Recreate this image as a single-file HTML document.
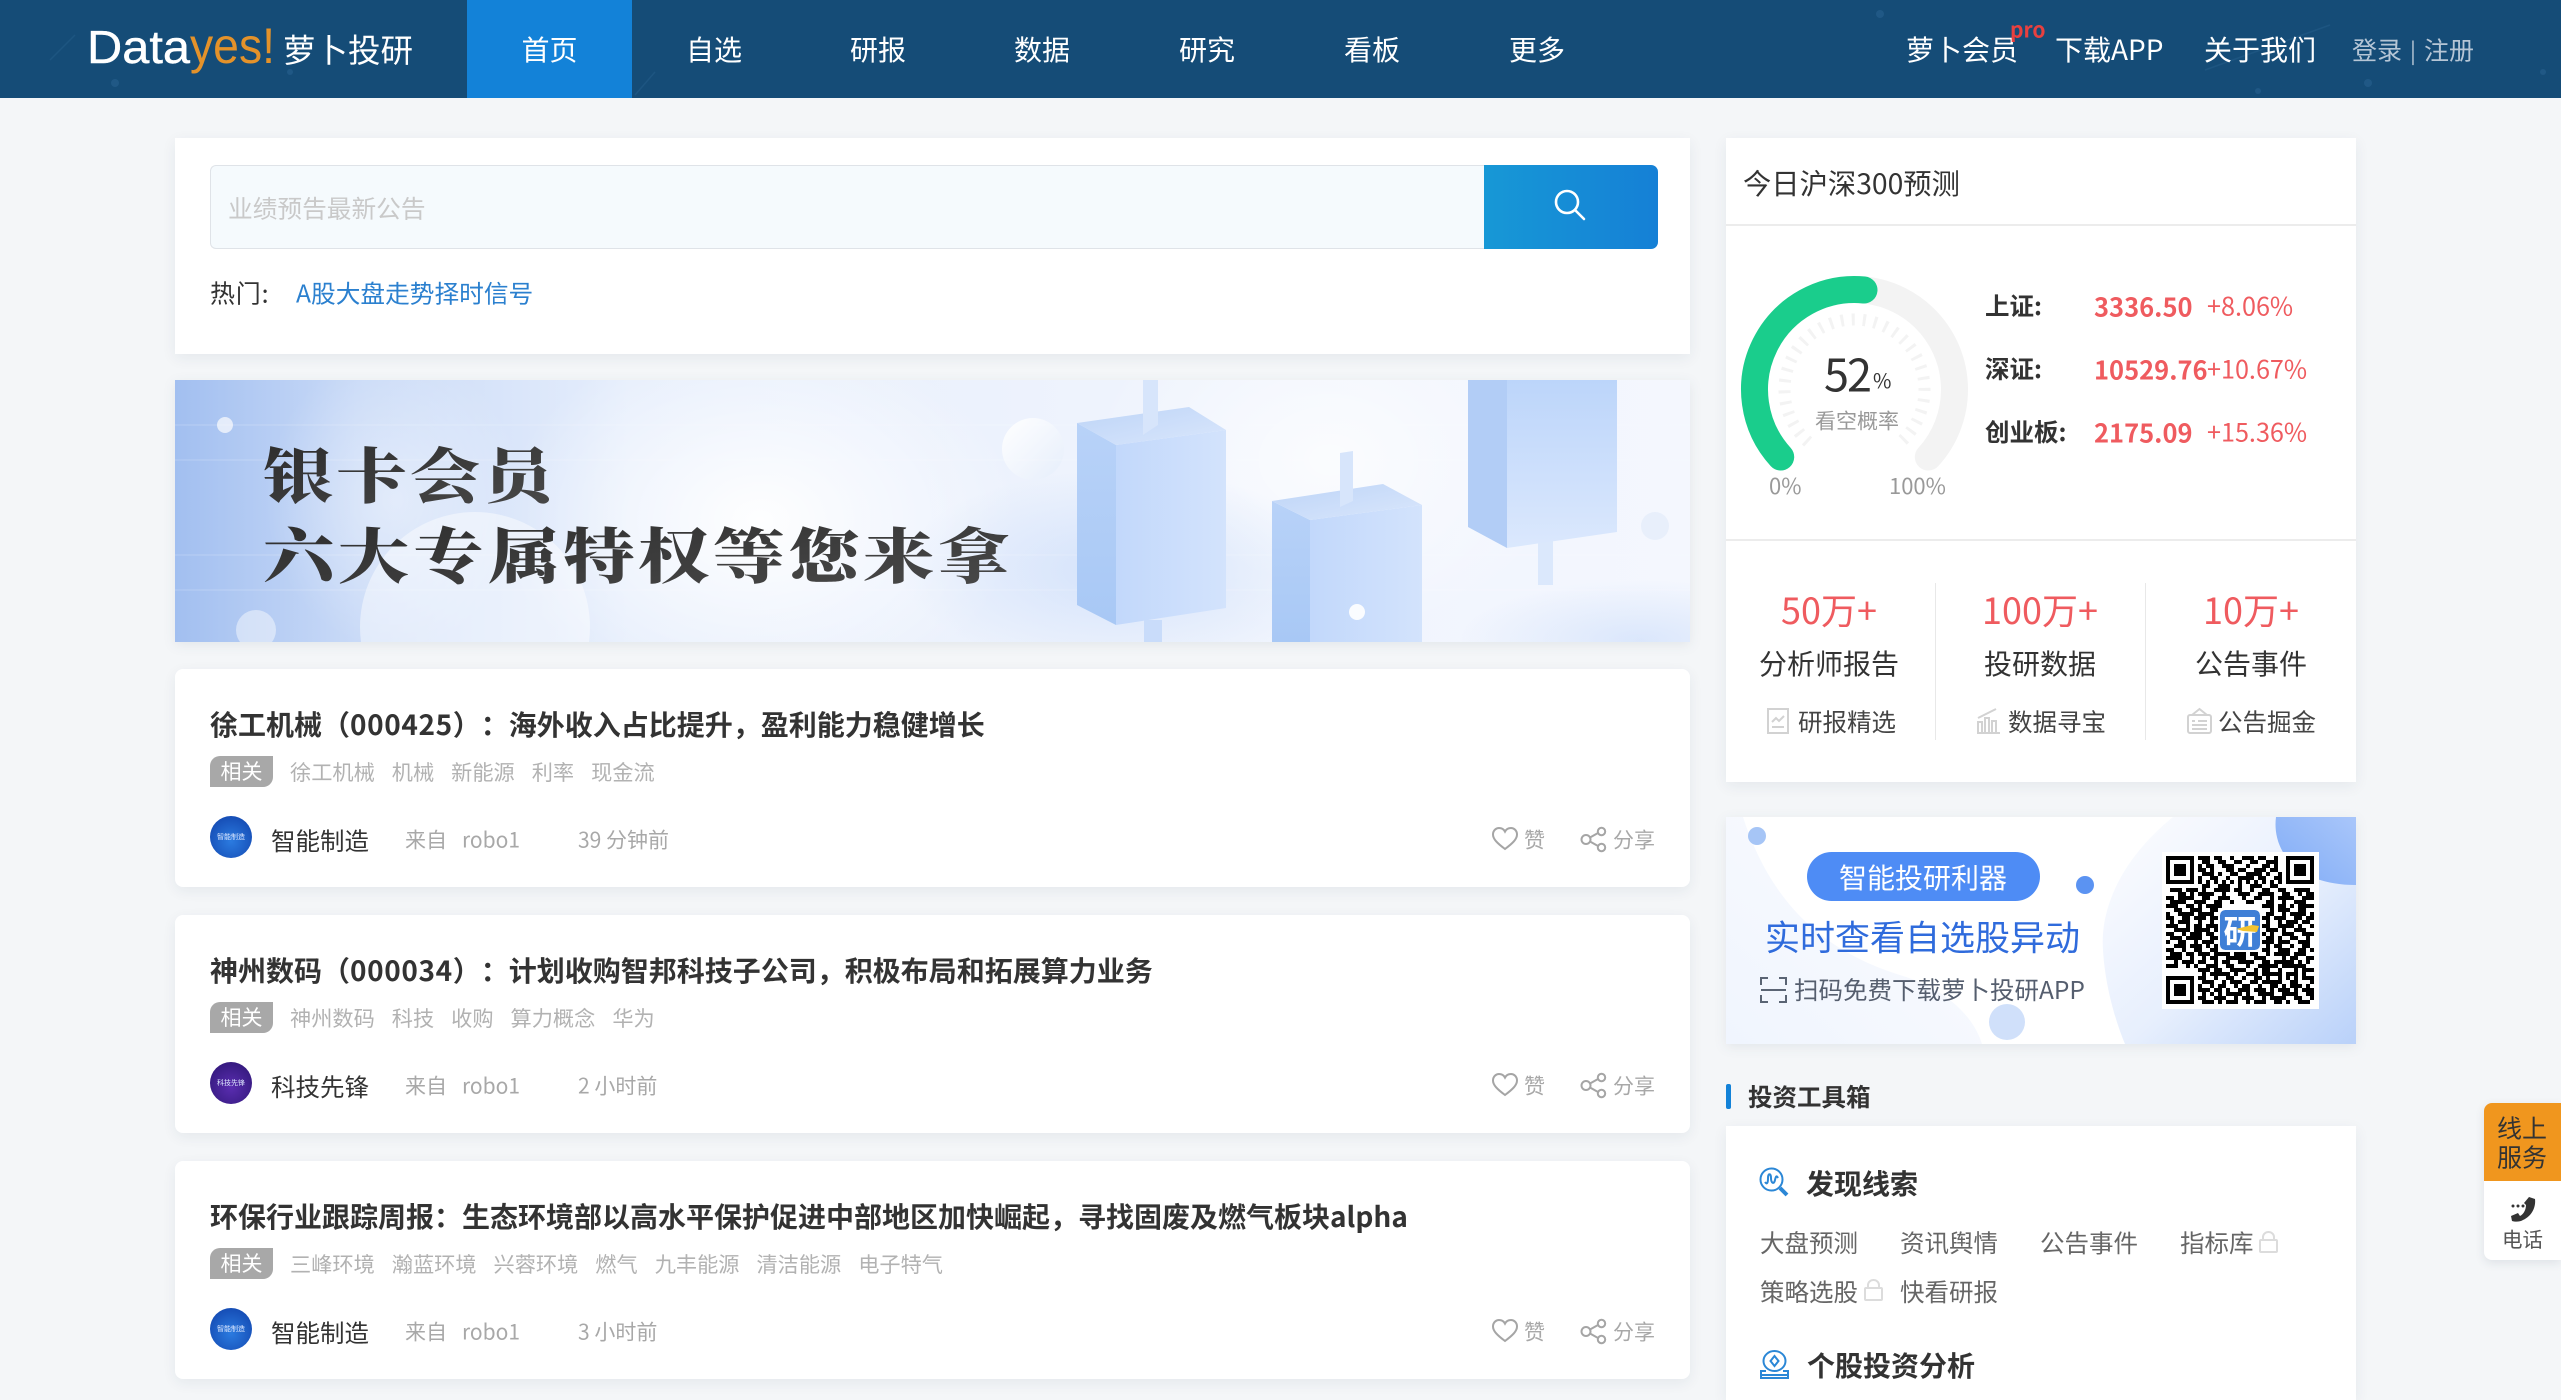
<!DOCTYPE html>
<html lang="zh-CN"><head><meta charset="utf-8"><title>Datayes! 萝卜投研</title>
<style>
html,body{margin:0;padding:0;width:2561px;height:1400px;overflow:hidden}
body{position:relative;background:#f4f6f8;font-family:"Noto Sans CJK SC","Liberation Sans",sans-serif;color:#333;text-spacing-trim:space-all}
.t{position:absolute;white-space:nowrap;line-height:1;transform:translateY(-50%)}
.c{position:absolute;white-space:nowrap;line-height:1;transform:translate(-50%,-50%)}
.box{position:absolute;background:#fff;box-shadow:0 4px 14px rgba(30,50,80,.07)}
.abs{position:absolute}
.nav{color:#fff;font-size:28px;top:49px}
.b{font-weight:700}
.red{color:#ef5b5f}
.card{position:absolute;left:175px;width:1515px;height:218px;background:#fff;border-radius:8px;box-shadow:0 4px 14px rgba(30,50,80,.07)}
.title{left:35px;top:55px;font-size:28px;font-weight:700;color:#333}
.title i{font-style:normal;letter-spacing:.6px}
.tag{position:absolute;left:35px;top:87px;width:63px;height:31px;background:#a8a8a8;color:#fff;font-size:21px;line-height:31px;text-align:center;border-radius:10px 0 10px 0}
.tags{position:absolute;left:115px;top:91px;display:flex;gap:17px;font-size:21.2px;line-height:24px;color:#b2b2b2;white-space:nowrap}
.av{position:absolute;left:35px;top:147px;width:42px;height:42px;border-radius:50%;color:#dfe9ff;font-size:7px;line-height:42px;text-align:center;overflow:hidden;white-space:nowrap}
.name{left:96px;top:172px;font-size:24.5px;color:#333}
.g{font-size:21px;color:#a8a8a8;top:171px}
.tool{font-size:24.5px;color:#666}
.stat{font-size:36px;color:#ef5b5f;top:609px}
.sub{font-size:28px;color:#333;top:663px}
.lk{font-size:24.5px;color:#444;top:722px}
</style></head><body>

<div class="abs" style="left:0;top:0;width:2561px;height:98px;background:#154c77;overflow:hidden">
<svg width="2561" height="98" class="abs" style="left:0;top:0"><g fill="#2a6391" opacity=".55"><circle cx="115" cy="83" r="4"/><circle cx="290" cy="72" r="3"/><circle cx="1880" cy="14" r="4"/><circle cx="2368" cy="83" r="4"/><circle cx="2258" cy="91" r="3"/><circle cx="2543" cy="72" r="3"/></g><g stroke="#2a6391" opacity=".4" stroke-width="1.5"><path d="M50 60 75 35"/><path d="M635 95 655 72"/><path d="M2205 70 2330 25"/></g></svg>
<svg width="440" height="98" class="abs" style="left:0;top:0"><text x="87" y="63" font-family="Liberation Sans,sans-serif" font-size="46" fill="#fff" stroke="#fff" stroke-width=".4" textLength="103" lengthAdjust="spacingAndGlyphs">Data</text><text x="190" y="63" font-family="Liberation Sans,sans-serif" font-size="50" fill="#e4922a" textLength="85" lengthAdjust="spacingAndGlyphs">yes!</text></svg>
<div class="t" style="left:283px;top:49px;font-size:32.5px;color:#fff">萝卜投研</div>
<div class="abs" style="left:467px;top:0;width:165px;height:98px;background:#1382d8"></div>
<div class="c nav" style="left:549.5px">首页</div>
<div class="c nav" style="left:714px">自选</div>
<div class="c nav" style="left:878px">研报</div>
<div class="c nav" style="left:1042px">数据</div>
<div class="c nav" style="left:1207px">研究</div>
<div class="c nav" style="left:1372px">看板</div>
<div class="c nav" style="left:1537px">更多</div>
<div class="t nav" style="left:1906px">萝卜会员</div>
<div class="t b" style="left:2010px;top:30px;font-size:21px;color:#e8403f">pro</div>
<div class="t nav" style="left:2055px">下载APP</div>
<div class="t nav" style="left:2204px">关于我们</div>
<div class="t" style="left:2352px;top:50px;font-size:25px;color:#b6c6d6">登录</div>
<div class="t" style="left:2410px;top:50px;font-size:22px;color:#b6c6d6">|</div>
<div class="t" style="left:2424px;top:50px;font-size:25px;color:#b6c6d6">注册</div>
</div>

<!-- search -->
<div class="box" style="left:175px;top:138px;width:1515px;height:216px"></div>
<div class="abs" style="left:210px;top:165px;width:1274px;height:84px;box-sizing:border-box;background:#f5fafd;border:1px solid #dfe3e8;border-right:0;border-radius:6px 0 0 6px"></div>
<div class="t" style="left:228px;top:208px;font-size:24.7px;color:#c9c9c9">业绩预告最新公告</div>
<div class="abs" style="left:1484px;top:165px;width:174px;height:84px;background:linear-gradient(90deg,#1798d6,#1580d6);border-radius:0 7px 7px 0"></div>
<svg class="abs" style="left:1550px;top:185px" width="40" height="40" fill="none" stroke="#fff" stroke-width="2.6"><circle cx="17" cy="17" r="11"/><path d="M25 25l9 9" stroke-linecap="round"/></svg>
<div class="t" style="left:210px;top:293px;font-size:25px;color:#333;letter-spacing:.8px">热门:</div>
<div class="t" style="left:296px;top:293px;font-size:24.7px;color:#2b80cf">A股大盘走势择时信号</div>

<!-- banner -->
<svg class="abs" style="left:175px;top:380px;filter:drop-shadow(0 3px 6px rgba(30,50,80,.08))" width="1515" height="262" viewBox="175 380 1515 262">
<defs>
<linearGradient id="bg" x1="0" y1="0" x2="1" y2="0"><stop offset="0" stop-color="#a2bff0"/><stop offset=".12" stop-color="#c9daf7"/><stop offset=".3" stop-color="#e6eefc"/><stop offset=".6" stop-color="#eef3fd"/><stop offset="1" stop-color="#f4f7fe"/></linearGradient>
<radialGradient id="glow"><stop offset="0" stop-color="#fff" stop-opacity=".95"/><stop offset="1" stop-color="#fff" stop-opacity="0"/></radialGradient>
<radialGradient id="bl"><stop offset="0" stop-color="#bcd3f8" stop-opacity=".75"/><stop offset="1" stop-color="#bcd3f8" stop-opacity="0"/></radialGradient>
<linearGradient id="fr" x1="0" y1="0" x2="1" y2="0"><stop offset="0" stop-color="#c2d8fb"/><stop offset="1" stop-color="#d3e3fc"/></linearGradient>
<linearGradient id="lf" x1="0" y1="0" x2="0" y2="1"><stop offset="0" stop-color="#b8d2f8"/><stop offset="1" stop-color="#a8c8f5"/></linearGradient>
<linearGradient id="tp" x1="0" y1="0" x2="1" y2="1"><stop offset="0" stop-color="#bdd4f7"/><stop offset="1" stop-color="#dae7fc"/></linearGradient>
<linearGradient id="c3" x1="0" y1="0" x2="0" y2="1"><stop offset="0" stop-color="#bcd5fa"/><stop offset="1" stop-color="#dbe8fd"/></linearGradient>
<linearGradient id="cir" x1="0" y1="0" x2="1" y2="1"><stop offset="0" stop-color="#fff"/><stop offset="1" stop-color="#e6eefb"/></linearGradient>
<linearGradient id="txt" x1="0" y1="0" x2="1" y2="1"><stop offset="0" stop-color="#2c2c2c"/><stop offset="1" stop-color="#4a4a4a"/></linearGradient>
</defs>
<rect x="175" y="380" width="1515" height="262" fill="url(#bg)"/>
<ellipse cx="760" cy="520" rx="260" ry="190" fill="url(#glow)"/>
<ellipse cx="395" cy="500" rx="130" ry="150" fill="url(#glow)" opacity=".45"/>
<ellipse cx="1330" cy="460" rx="240" ry="180" fill="url(#glow)" opacity=".75"/>
<ellipse cx="1120" cy="570" rx="220" ry="100" fill="url(#bl)" opacity=".7"/>
<ellipse cx="1640" cy="640" rx="180" ry="60" fill="url(#bl)" opacity=".6"/>
<circle cx="475" cy="627" r="115" fill="#fff" opacity=".45"/>
<circle cx="256" cy="630" r="20" fill="#fff" opacity=".45"/>
<circle cx="225" cy="425" r="8" fill="#f2f5fb" opacity=".8"/>
<circle cx="1033" cy="449" r="31" fill="url(#cir)"/>
<circle cx="1655" cy="526" r="14" fill="#e8effb"/>
<g stroke="#fff" stroke-opacity=".15" stroke-width="1.5"><path d="M175 425H1690M175 460H1690M175 555H1690M175 590H1690"/></g>
<!-- candle 1 -->
<path d="M1144 620h18v22h-18z" fill="#c9dcfa"/>
<path d="M1116 445 1226 430V608L1116 625Z" fill="url(#fr)"/>
<path d="M1077 423 1116 445V625L1077 605Z" fill="url(#lf)"/>
<path d="M1077 423 1189 407 1226 430 1116 445Z" fill="url(#tp)"/>
<path d="M1143 380h15v45l-15 10z" fill="#d7e5fb"/>
<!-- candle 2 -->
<path d="M1310 520 1422 505V642H1310Z" fill="url(#fr)"/>
<path d="M1272 501 1310 520V642H1272Z" fill="url(#lf)"/>
<path d="M1272 501 1383 484 1422 505 1310 520Z" fill="url(#tp)"/>
<path d="M1340 453l13-2v50l-13 6z" fill="#d7e5fb"/>
<circle cx="1357" cy="612" r="8" fill="#fff" opacity=".9"/>
<!-- candle 3 -->
<path d="M1538 540h15v45h-15z" fill="#dbe8fc"/>
<path d="M1507 380H1617V532L1507 548Z" fill="url(#c3)"/>
<path d="M1468 380H1507V548L1468 527Z" fill="#b2cdf6"/>
<text x="263" y="498" font-family="Noto Serif CJK SC,serif" font-weight="900" font-size="60" textLength="294" lengthAdjust="spacingAndGlyphs" letter-spacing="3" fill="url(#txt)">银卡会员</text>
<text x="263" y="578" font-family="Noto Serif CJK SC,serif" font-weight="900" font-size="60" textLength="750" lengthAdjust="spacingAndGlyphs" letter-spacing="3" fill="url(#txt)">六大专属特权等您来拿</text>
</svg>

<!-- news -->
<div class="card" style="top:669px">
<div class="t title">徐工机械（<i>000425</i>）：海外收入占比提升，盈利能力稳健增长</div>
<div class="tag">相关</div>
<div class="tags"><span>徐工机械</span><span>机械</span><span>新能源</span><span>利率</span><span>现金流</span></div>
<div class="av" style="background:radial-gradient(circle at 50% 60%,#2b7be0,#0f3fa8)">智能制造</div>
<div class="t name">智能制造</div>
<div class="t g" style="left:230px">来自</div><div class="t g" style="left:287px">robo1</div><div class="t g" style="left:403px">39 分钟前</div>
<svg class="abs" style="left:1316px;top:157px" width="28" height="26" fill="none" stroke="#a5a5a5" stroke-width="2"><path d="M14 23C6 17 2 13 2 8.500 2 4.500 5 2 8 2c2.600 0 4.800 1.300 6 3.600C15.200 3.300 17.400 2 20 2c3 0 6 2.500 6 6.500C26 13 22 17 14 23Z"/></svg>
<div class="t g" style="left:1349px">赞</div>
<svg class="abs" style="left:1405px;top:157px" width="28" height="27" fill="none" stroke="#a5a5a5" stroke-width="2"><circle cx="6" cy="13.500" r="4.500"/><circle cx="21.500" cy="5.500" r="3.700"/><circle cx="21.500" cy="21.500" r="3.700"/><path d="M10 11.500l8-4.500M10 15.500l8 4.500"/></svg>
<div class="t g" style="left:1438px">分享</div>
</div>
<div class="card" style="top:915px">
<div class="t title">神州数码（<i>000034</i>）：计划收购智邦科技子公司，积极布局和拓展算力业务</div>
<div class="tag">相关</div>
<div class="tags"><span>神州数码</span><span>科技</span><span>收购</span><span>算力概念</span><span>华为</span></div>
<div class="av" style="background:radial-gradient(circle at 50% 60%,#5a2db0,#2a1470)">科技先锋</div>
<div class="t name">科技先锋</div>
<div class="t g" style="left:230px">来自</div><div class="t g" style="left:287px">robo1</div><div class="t g" style="left:403px">2 小时前</div>
<svg class="abs" style="left:1316px;top:157px" width="28" height="26" fill="none" stroke="#a5a5a5" stroke-width="2"><path d="M14 23C6 17 2 13 2 8.500 2 4.500 5 2 8 2c2.600 0 4.800 1.300 6 3.600C15.200 3.300 17.400 2 20 2c3 0 6 2.500 6 6.500C26 13 22 17 14 23Z"/></svg>
<div class="t g" style="left:1349px">赞</div>
<svg class="abs" style="left:1405px;top:157px" width="28" height="27" fill="none" stroke="#a5a5a5" stroke-width="2"><circle cx="6" cy="13.500" r="4.500"/><circle cx="21.500" cy="5.500" r="3.700"/><circle cx="21.500" cy="21.500" r="3.700"/><path d="M10 11.500l8-4.500M10 15.500l8 4.500"/></svg>
<div class="t g" style="left:1438px">分享</div>
</div>
<div class="card" style="top:1161px">
<div class="t title">环保行业跟踪周报：生态环境部以高水平保护促进中部地区加快崛起，寻找固废及燃气板块alpha</div>
<div class="tag">相关</div>
<div class="tags"><span>三峰环境</span><span>瀚蓝环境</span><span>兴蓉环境</span><span>燃气</span><span>九丰能源</span><span>清洁能源</span><span>电子特气</span></div>
<div class="av" style="background:radial-gradient(circle at 50% 60%,#2b7be0,#0f3fa8)">智能制造</div>
<div class="t name">智能制造</div>
<div class="t g" style="left:230px">来自</div><div class="t g" style="left:287px">robo1</div><div class="t g" style="left:403px">3 小时前</div>
<svg class="abs" style="left:1316px;top:157px" width="28" height="26" fill="none" stroke="#a5a5a5" stroke-width="2"><path d="M14 23C6 17 2 13 2 8.500 2 4.500 5 2 8 2c2.600 0 4.800 1.300 6 3.600C15.200 3.300 17.400 2 20 2c3 0 6 2.500 6 6.500C26 13 22 17 14 23Z"/></svg>
<div class="t g" style="left:1349px">赞</div>
<svg class="abs" style="left:1405px;top:157px" width="28" height="27" fill="none" stroke="#a5a5a5" stroke-width="2"><circle cx="6" cy="13.500" r="4.500"/><circle cx="21.500" cy="5.500" r="3.700"/><circle cx="21.500" cy="21.500" r="3.700"/><path d="M10 11.500l8-4.500M10 15.500l8 4.500"/></svg>
<div class="t g" style="left:1438px">分享</div>
</div>

<!-- right: forecast -->
<div class="box" style="left:1726px;top:138px;width:630px;height:644px"></div>
<div class="t" style="left:1743px;top:183px;font-size:28.3px;color:#333">今日沪深300预测</div>
<div class="abs" style="left:1726px;top:224px;width:630px;height:2px;background:#ececec"></div>
<svg class="abs" style="left:1726px;top:250px" width="260" height="230" viewBox="1726 250 260 230" fill="none">
<path d="M1780.700 457A100 100 0 1 1 1928.300 457" stroke="#f3f3f3" stroke-width="27" stroke-linecap="round"/>
<path d="M1808.200 442A70 70 0 1 1 1900.800 442" stroke="#f3f3f3" stroke-width="12" stroke-dasharray="3 8.100"/>
<path d="M1780.700 457A100 100 0 0 1 1864 290" stroke="#1acd8c" stroke-width="27" stroke-linecap="round"/>
</svg>
<div class="t" style="left:1824px;top:372px;font-size:45px;color:#333;letter-spacing:-2px">52</div>
<div class="t" style="left:1873px;top:380px;font-size:20px;color:#333">%</div>
<div class="t" style="left:1815px;top:421px;font-size:21px;color:#999">看空概率</div>
<div class="t" style="left:1769px;top:485px;font-size:22px;color:#999">0%</div>
<div class="t" style="left:1889px;top:485px;font-size:22px;color:#999">100%</div>
<div class="t b" style="left:1985px;top:306px;font-size:24.5px">上证:</div>
<div class="t b" style="left:1985px;top:369px;font-size:24.5px">深证:</div>
<div class="t b" style="left:1985px;top:432px;font-size:24.5px">创业板:</div>
<div class="t b red" style="left:2094px;top:306px;font-size:25.5px">3336.50</div>
<div class="t b red" style="left:2094px;top:369px;font-size:25.5px">10529.76</div>
<div class="t b red" style="left:2094px;top:432px;font-size:25.5px">2175.09</div>
<div class="t red" style="left:2207px;top:306px;font-size:25.2px">+8.06%</div>
<div class="t red" style="left:2207px;top:369px;font-size:25.2px">+10.67%</div>
<div class="t red" style="left:2207px;top:432px;font-size:25.2px">+15.36%</div>
<div class="abs" style="left:1726px;top:539px;width:630px;height:2px;background:#ececec"></div>
<div class="abs" style="left:1935px;top:583px;width:1px;height:157px;background:#e8e8e8"></div>
<div class="abs" style="left:2145px;top:583px;width:1px;height:157px;background:#e8e8e8"></div>
<div class="c stat" style="left:1829px">50万+</div>
<div class="c stat" style="left:2040px">100万+</div>
<div class="c stat" style="left:2251px">10万+</div>
<div class="c sub" style="left:1829px">分析师报告</div>
<div class="c sub" style="left:2040px">投研数据</div>
<div class="c sub" style="left:2251px">公告事件</div>
<svg class="abs" style="left:1767px;top:708px" width="22" height="26" fill="none" stroke="#d2d2d2" stroke-width="2"><rect x="1" y="1" width="20" height="24"/><path d="M5 14l4-4 3 3 5-5M5 19h12"/></svg>
<div class="t lk" style="left:1798px">研报精选</div>
<svg class="abs" style="left:1976px;top:708px" width="25" height="26" fill="none" stroke="#d2d2d2" stroke-width="2"><path d="M2 14h4v11H2zM9 10h4v15H9zM16 13h4v12h-4zM1 25h23M2 10 20 1"/></svg>
<div class="t lk" style="left:2008px">数据寻宝</div>
<svg class="abs" style="left:2187px;top:707px" width="25" height="27" fill="none" stroke="#d2d2d2" stroke-width="2"><rect x="1" y="8" width="23" height="18" rx="2"/><path d="M5 8l7.500-6L20 8M5 14h3M11 14h9M5 18h15M5 22h15"/></svg>
<div class="t lk" style="left:2218px">公告掘金</div>

<!-- right: QR banner -->
<svg class="abs" style="left:1726px;top:817px;filter:drop-shadow(0 3px 6px rgba(30,50,80,.08))" width="630" height="227" viewBox="1726 817 630 227">
<defs>
<linearGradient id="qa" x1="0" y1="1" x2="1" y2="0"><stop offset="0" stop-color="#f0f5fe"/><stop offset="1" stop-color="#fbfcff"/></linearGradient>
<linearGradient id="qb" x1="0" y1="0" x2="1" y2="1"><stop offset="0" stop-color="#fdfdff"/><stop offset=".55" stop-color="#e7effd"/><stop offset="1" stop-color="#b9d1f9"/></linearGradient>
<linearGradient id="qc" x1="0" y1="1" x2="1" y2="0"><stop offset="0" stop-color="#7fabf6"/><stop offset="1" stop-color="#a9c6fa"/></linearGradient>
</defs>
<rect x="1726" y="817" width="630" height="227" fill="#fff"/>
<path d="M1726 817h17C1770 900 1820 950 1900 975 1950 990 1975 1020 1982 1044H1726Z" fill="url(#qa)"/>
<path d="M2173 817C2120 860 2100 910 2103 950 2105 985 2115 1020 2125 1044H2356V817Z" fill="url(#qb)"/>
<path d="M2276 817c-4 30 16 68 80 68V817Z" fill="url(#qc)"/>
<circle cx="1757" cy="836" r="9" fill="#a6c5f6"/>
<circle cx="2085" cy="885" r="9" fill="#5b93f2"/>
<circle cx="2007" cy="1022" r="18" fill="#d0e0fa"/>
<rect x="1807" y="852" width="233" height="49" rx="24.500" fill="#4e8cf5"/>
</svg>
<div class="c" style="left:1923px;top:877px;font-size:28px;color:#fff">智能投研利器</div>
<div class="t" style="left:1765px;top:936px;font-size:35px;color:#2f6bdc">实时查看自选股异动</div>
<svg class="abs" style="left:1760px;top:977px" width="27" height="26" fill="none" stroke="#5a6474" stroke-width="2"><path d="M1 8V1h7M19 1h7v7M1 18v7h7M19 25h7v-7M1 13h25"/></svg>
<div class="t" style="left:1794px;top:990px;font-size:24.5px;color:#555e6e">扫码免费下载萝卜投研APP</div>
<div class="abs" style="left:2162px;top:852px;width:157px;height:157px;background:#fff"></div>
<svg class="abs" style="left:2166px;top:856px" width="148" height="148" viewBox="0 0 37 37" shape-rendering="crispEdges">
<g fill="none" stroke="#000"><path stroke-width="1" d="M.5.500h6v6h-6zM30.500.500h6v6h-6zM.5 30.500h6v6h-6z"/>
<path stroke-width="1" d="M8 .5h3M12 .5h2M16 .5h1M19 .5h3M23 .5h2M27 .5h1M9 1.500h2M13 1.500h2M17 1.500h2M21 1.500h2M25 1.500h3M8 2.500h1M10 2.500h2M14 2.500h3M20 2.500h1M24 2.500h2M27 2.500h1M8 3.500h2M11 3.500h1M15 3.500h2M18 3.500h2M22 3.500h3M26 3.500h2M9 4.500h3M13 4.500h1M16 4.500h2M20 4.500h4M25 4.500h1M28 4.500h1M8 5.500h1M11 5.500h2M15 5.500h1M18 5.500h4M23 5.500h2M27 5.500h2M8 6.500h1M10 6.500h1M12 6.500h1M14 6.500h1M16 6.500h1M18 6.500h1M20 6.500h1M22 6.500h1M24 6.500h1M26 6.500h1M28 6.500h1M9 7.500h2M13 7.500h3M18 7.500h1M21 7.500h3M26 7.500h2M1 8.500h3M5 8.500h3M9 8.500h1M12 8.500h4M17 8.500h2M21 8.500h1M24 8.500h2M28 8.500h2M32 8.500h4M3 9.500h2M6 9.500h1M8 9.500h4M14 9.500h1M18 9.500h3M23 9.500h4M29 9.500h2M33 9.500h1M35 9.500h2M0 10.500h2M3 10.500h4M9 10.500h2M13 10.500h3M19 10.500h1M22 10.500h2M26 10.500h1M28 10.500h4M34 10.500h3M1 11.500h4M7 11.500h3M12 11.500h2M16 11.500h1M20 11.500h2M25 11.500h2M29 11.500h1M32 11.500h3M0 12.500h3M5 12.500h2M8 12.500h1M10 12.500h4M24 12.500h3M28 12.500h2M31 12.500h1M33 12.500h4M2 13.500h2M6 13.500h3M11 13.500h2M26 13.500h1M28 13.500h3M33 13.500h2M0 14.500h1M3 14.500h4M8 14.500h4M25 14.500h2M29 14.500h1M31 14.500h4M36 14.500h1M0 15.500h2M4 15.500h2M7 15.500h3M11 15.500h2M24 15.500h2M27 15.500h3M32 15.500h2M35 15.500h2M1 16.500h1M3 16.500h3M8 16.500h1M11 16.500h1M25 16.500h1M28 16.500h1M30 16.500h3M34 16.500h2M0 17.500h3M5 17.500h1M7 17.500h2M10 17.500h3M24 17.500h2M28 17.500h4M33 17.500h1M36 17.500h1M2 18.500h4M7 18.500h4M12 18.500h1M25 18.500h3M29 18.500h1M32 18.500h3M0 19.500h2M4 19.500h1M6 19.500h3M10 19.500h2M24 19.500h1M26 19.500h1M29 19.500h3M34 19.500h3M1 20.500h3M5 20.500h4M11 20.500h2M25 20.500h2M28 20.500h1M31 20.500h2M35 20.500h1M0 21.500h1M3 21.500h2M7 21.500h1M9 21.500h3M24 21.500h3M28 21.500h3M33 21.500h3M2 22.500h3M6 22.500h3M10 22.500h1M12 22.500h1M25 22.500h1M27 22.500h2M31 22.500h1M34 22.500h2M0 23.500h2M4 23.500h1M7 23.500h2M11 23.500h2M24 23.500h2M28 23.500h3M33 23.500h2M36 23.500h1M1 24.500h3M5 24.500h2M8 24.500h3M12 24.500h4M17 24.500h3M21 24.500h2M25 24.500h1M27 24.500h4M32 24.500h3M0 25.500h4M6 25.500h1M9 25.500h1M11 25.500h2M15 25.500h5M22 25.500h3M29 25.500h1M31 25.500h2M35 25.500h2M2 26.500h1M4 26.500h3M8 26.500h2M12 26.500h1M14 26.500h2M18 26.500h4M24 26.500h2M27 26.500h5M33 26.500h1M35 26.500h1M0 27.500h3M5 27.500h1M7 27.500h1M10 27.500h3M15 27.500h2M20 27.500h1M23 27.500h5M29 27.500h6M8 28.500h3M12 28.500h2M16 28.500h4M22 28.500h1M24 28.500h2M28 28.500h1M32 28.500h1M34 28.500h3M9 29.500h1M11 29.500h5M17 29.500h1M20 29.500h3M24 29.500h5M30 29.500h3M34 29.500h1M8 30.500h2M12 30.500h1M15 30.500h2M19 30.500h1M22 30.500h2M25 30.500h1M28 30.500h1M30 30.500h1M32 30.500h1M34 30.500h3M9 31.500h3M14 31.500h1M16 31.500h3M21 31.500h2M24 31.500h5M31 31.500h2M36 31.500h1M8 32.500h1M11 32.500h1M13 32.500h2M17 32.500h1M19 32.500h2M23 32.500h1M26 32.500h2M29 32.500h1M31 32.500h3M35 32.500h1M8 33.500h3M12 33.500h2M15 33.500h1M18 33.500h3M22 33.500h3M26 33.500h1M28 33.500h3M32 33.500h1M34 33.500h3M9 34.500h1M11 34.500h1M13 34.500h1M15 34.500h4M20 34.500h1M23 34.500h4M29 34.500h4M35 34.500h2M8 35.500h2M12 35.500h3M17 35.500h1M19 35.500h3M24 35.500h1M26 35.500h4M32 35.500h2M36 35.500h1M9 36.500h3M13 36.500h1M15 36.500h3M20 36.500h1M22 36.500h3M27 36.500h2M30 36.500h1M33 36.500h3"/></g>
<rect x="2" y="2" width="3" height="3"/><rect x="32" y="2" width="3" height="3"/><rect x="2" y="32" width="3" height="3"/>
</svg>
<div class="abs" style="left:2220px;top:910px;width:40px;height:40px;background:#3f7fd6;border-radius:5px;outline:2px solid #fff"></div>
<div class="c b" style="left:2240px;top:930px;font-size:33px;color:#fff">研</div>
<svg class="abs" style="left:2236px;top:924px" width="24" height="10"><path d="M0 5 16 1l7 1-2 6-14-1z" fill="#f4c430"/></svg>

<!-- toolbox -->
<div class="abs" style="left:1726px;top:1084px;width:5px;height:25px;background:#1382d8;border-radius:2px"></div>
<div class="t b" style="left:1748px;top:1097px;font-size:24.5px;color:#333">投资工具箱</div>
<div class="box" style="left:1726px;top:1126px;width:630px;height:274px"></div>
<svg class="abs" style="left:1759px;top:1167px" width="31" height="30" fill="none" stroke="#2b87d6" stroke-width="2"><circle cx="12.500" cy="12.500" r="11"/><path d="M6 15c2 3 3 1 3-4s3-5 3 0 3 7 4 2 2-4 3-2"/><path d="M21 21l7 7" stroke-width="4"/></svg>
<div class="t b" style="left:1806px;top:1183px;font-size:28px;color:#333">发现线索</div>
<div class="t tool" style="left:1760px;top:1243px">大盘预测</div>
<div class="t tool" style="left:1900px;top:1243px">资讯舆情</div>
<div class="t tool" style="left:2040px;top:1243px">公告事件</div>
<div class="t tool" style="left:2180px;top:1243px">指标库</div>
<svg class="abs" style="left:2259px;top:1231px" width="20" height="22" fill="none" stroke="#dcdcdc" stroke-width="2"><rect x="1" y="9" width="17" height="12" rx="1"/><path d="M4 9V6a5.500 5 0 0 1 11 0v3"/></svg>
<div class="t tool" style="left:1760px;top:1292px">策略选股</div>
<svg class="abs" style="left:1864px;top:1279px" width="20" height="22" fill="none" stroke="#dcdcdc" stroke-width="2"><rect x="1" y="9" width="17" height="12" rx="1"/><path d="M4 9V6a5.500 5 0 0 1 11 0v3"/></svg>
<div class="t tool" style="left:1900px;top:1292px">快看研报</div>
<svg class="abs" style="left:1759px;top:1350px" width="31" height="30" fill="none" stroke="#2b87d6" stroke-width="2"><ellipse cx="15.500" cy="11" rx="11" ry="10"/><path d="M15.500 6l4 5-4 5-4-5z"/><path d="M7 21H2v7h27v-7h-5M2 25h27"/></svg>
<div class="t b" style="left:1807px;top:1365px;font-size:28px;color:#333">个股投资分析</div>

<!-- floating -->
<div class="abs" style="left:2484px;top:1103px;width:77px;height:157px;background:#fff;border-radius:8px 0 0 8px;box-shadow:0 3px 10px rgba(30,50,80,.1)"></div>
<div class="abs" style="left:2484px;top:1103px;width:77px;height:78px;background:#f0961e;border-radius:8px 0 0 0"></div>
<div class="t" style="left:2497px;top:1128px;font-size:25px;color:#333">线上</div>
<div class="t" style="left:2497px;top:1157px;font-size:25px;color:#333">服务</div>
<svg class="abs" style="left:2510px;top:1196px" width="27" height="27"><path d="M19 1l6 2c1 8-3 17-12 21-3 2-8 2-11 1l-1-5 7-3 2 3c4-2 6-7 6-11l-2-2z" fill="#333"/><circle cx="3" cy="10" r="1.500" fill="#333"/><circle cx="8" cy="10" r="1.500" fill="#333"/><circle cx="13" cy="10" r="1.500" fill="#333"/></svg>
<div class="t" style="left:2502px;top:1238px;font-size:20.5px;color:#555">电话</div>
</body></html>
